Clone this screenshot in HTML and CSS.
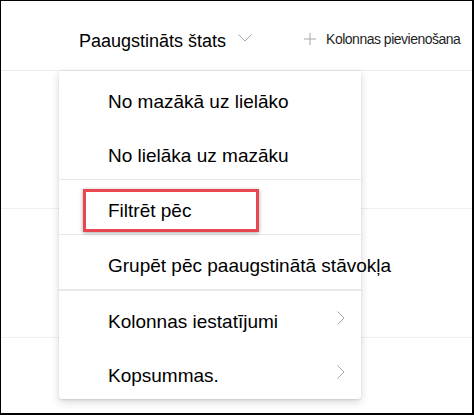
FILE: index.html
```html
<!DOCTYPE html>
<html lang="lv">
<head>
<meta charset="utf-8">
<title>Kolonnas izvēlne</title>
<link rel="stylesheet" href="styles.css">
</head>
<body>
<div class="frame">
  <div class="header">
    <span class="col-title">Paaugstināts štats</span>
    <svg class="chev-down" width="14" height="8" viewBox="0 0 14 8"><polyline points="0.5,0.5 7,7 13.5,0.5" fill="none" stroke="#a6a6a6" stroke-width="1"/></svg>
    <svg class="plus" width="12" height="12" viewBox="0 0 12 12"><path d="M6 0V12M0 6H12" fill="none" stroke="#a6a6a6" stroke-width="1"/></svg>
    <span class="add-col">Kolonnas pievienošana</span>
  </div>
  <div class="row row-a"></div>
  <div class="row row-b"></div>

  <div class="menu">
    <div class="section">
      <div class="item">No mazākā uz lielāko</div>
      <div class="item">No lielāka uz mazāku</div>
    </div>
    <div class="section">
      <div class="item">Filtrēt pēc</div>
    </div>
    <div class="section">
      <div class="item">Grupēt pēc paaugstinātā stāvokļa</div>
    </div>
    <div class="section thick">
      <div class="item">Kolonnas iestatījumi
        <svg class="chev-right" width="8" height="14" viewBox="0 0 8 14"><polyline points="0.5,0.5 7,7 0.5,13.5" fill="none" stroke="#a6a6a6" stroke-width="1"/></svg>
      </div>
      <div class="item">Kopsummas.
        <svg class="chev-right" width="8" height="14" viewBox="0 0 8 14"><polyline points="0.5,0.5 7,7 0.5,13.5" fill="none" stroke="#a6a6a6" stroke-width="1"/></svg>
      </div>
    </div>
    <div class="highlight"></div>
  </div>
</div>
</body>
</html>
```

FILE: styles.css
```css
* { box-sizing: border-box; }
html, body { margin: 0; padding: 0; background: #fff; }
body { font-family: "Liberation Sans", Arial, sans-serif; color: #000; }

.frame {
  position: relative;
  width: 474px;
  height: 415px;
  border: 1px solid #000;
  border-right-width: 2px;
  border-bottom-width: 2px;
  overflow: hidden;
  background: #fff;
}

.header {
  display: flex;
  align-items: flex-start;
  height: 70px;
  padding: 30px 0 0 78px;
  border-bottom: 1px solid #ececec;
}
.col-title { font-size: 18px; line-height: 20px; color: #000; }
.chev-down { margin: 3px 0 0 12px; flex: none; }
.plus { margin: 2px 0 0 52px; flex: none; }
.add-col {
  margin: -2px 0 0 10px;
  font-size: 14px;
  line-height: 20px;
  letter-spacing: -0.5px;
  color: #1f1f1f;
}

.row { border-bottom: 1px solid #efefef; }
.row-a { height: 138px; }
.row-b { height: 129px; }

.menu {
  position: absolute;
  left: 58px;
  top: 70px;
  width: 302px;
  background: #fff;
  border-radius: 0 0 3px 3px;
  box-shadow: 0 3px 8px rgba(0,0,0,0.16), 0 0.6px 2px rgba(0,0,0,0.1);
}
.section + .section { border-top: 1px solid #e8e8e8; }
.section.thick { border-top-width: 2px; }
.item {
  display: flex;
  align-items: center;
  justify-content: space-between;
  height: 54px;
  padding: 7px 16px 0 49px;
  font-size: 19px;
  white-space: nowrap;
  color: #000;
}
.chev-right { flex: none; margin-top: -7px; }

.highlight {
  position: absolute;
  left: 24px;
  top: 118px;
  width: 176px;
  height: 43px;
  border: 3px solid #e8474f;
  box-shadow: 0 1px 4px rgba(0,0,0,0.35);
  pointer-events: none;
}
```
